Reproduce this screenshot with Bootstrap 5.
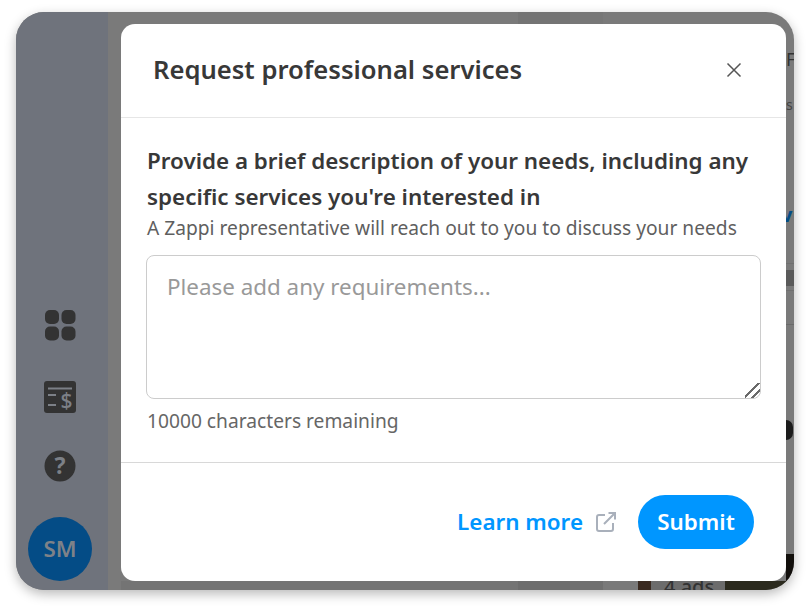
<!DOCTYPE html>
<html lang="en">
<head>
<meta charset="utf-8">
<title>Request professional services</title>
<link href="https://cdn.jsdelivr.net/npm/bootstrap@5.3.0/dist/css/bootstrap.min.css" rel="stylesheet">
<style>
html,body{height:100%;background:#fff;overflow:hidden}
body{padding:12px 16px 20px;font-family:"Noto Sans",sans-serif;color:#333}
.app-win{position:relative;height:578px;width:778px;border-radius:28px;overflow:hidden;background:#7a7a7a;box-shadow:0 4px 12px rgba(0,0,0,.28)}
.side-rail{width:92px;background:#6f737c;padding:0 4px 9px 0;gap:35px}
.side-ic{width:32px;height:32px;display:block}
.ic-grid{margin-bottom:5px}
.ic-bill{margin-bottom:2px}
.side-av{width:64px;height:64px;background:#044c86;color:#7e8288;font-size:22.4px;font-weight:600}
.bg-main{min-width:0}
.strip-a{position:absolute;top:0;left:502px;width:52px;height:12px;background:#747474}
.strip-b{position:absolute;top:0;left:554px;width:33px;height:12px;background:#777}
.foot-a{position:absolute;top:569px;left:502px;width:52px;height:9px;background:#6d6d6d}
.foot-b{position:absolute;top:569px;left:554px;width:33px;height:9px;background:#707070}
.foot-c{position:absolute;top:569px;left:105px;width:397px;height:9px;background:#747474}
.edge-p{position:absolute;left:770px;top:38px;font-size:18px;color:#333;line-height:1}
.edge-s{position:absolute;left:770px;top:86px;font-size:14px;color:#444;line-height:1}
.edge-v{position:absolute;left:765px;top:193px;font-size:20px;font-weight:700;color:#044c86;line-height:1}
.edge-bar{position:absolute;left:770px;top:258px;width:8px;height:16px;background:#5a5a5a}
.edge-l1{position:absolute;left:770px;top:251px;width:8px;height:1px;background:#707070}
.edge-l2{position:absolute;left:770px;top:278px;width:8px;height:1px;background:#707070}
.edge-line{position:absolute;left:770px;top:312px;width:8px;height:1px;background:#6a6a6a}
.edge-dot{position:absolute;left:770px;top:408px;width:7px;height:20px;background:#1c1c1c;border-radius:0 8px 8px 0}
.edge-foot-a{position:absolute;left:622px;top:569px;width:13px;height:9px;background:#3a2a20}
.edge-foot-b{position:absolute;left:635px;top:569px;width:74px;height:9px;background:#6c6c6c;color:#333;font-size:20px;font-weight:500;line-height:12px;padding-left:13px;overflow:hidden}
.edge-foot-c{position:absolute;left:709px;top:569px;width:61px;height:9px;background:#2b2a1e}
.edge-corner{position:absolute;left:770px;top:542px;width:8px;height:36px;background:linear-gradient(#120f0c 70%,#4a3526)}
.req-box{position:absolute;left:105px;top:12px;width:665px;height:557px;background:#fff;border-radius:14px;display:flex;flex-direction:column;border:0}
.req-head{height:94px;padding:0 42px 0 32px;border-bottom:1px solid #e6e6e6}
.req-title{font-size:25.6px;font-weight:600;color:#383838;margin:0;line-height:34px;position:relative;top:-1px}
.req-x{background:none;border:0;padding:0;width:20px;height:20px;display:block;position:relative;top:-1px}
.req-x svg{display:block}
.req-body{padding:25px 25px 0 26px;height:345px;border-bottom:1px solid #d8d8d8}
.req-lead{font-size:22.4px;font-weight:600;line-height:36px;color:#383838;margin:0}
.req-sub{font-size:19.2px;line-height:26px;color:#5f5f5f;margin:0 0 14px}
.req-area.form-control{height:144px;width:615px;margin-left:-1px;border:1px solid #ccc;border-radius:8px;font-size:22.4px;line-height:30px;padding:16px 20px;color:#333}
.req-area.form-control::placeholder{color:#999}
.req-area::-webkit-resizer{background:linear-gradient(135deg,transparent 42%,#6a6a6a 42% 52%,transparent 52% 68%,#6a6a6a 68% 78%,transparent 78%)}
.req-count{font-size:19.2px;line-height:26px;color:#666;margin:9px 0 0}
.req-foot{flex:1;padding:0 32px 0 0;gap:21px}
.req-more{font-size:22.4px;font-weight:600;color:#0096ff;text-decoration:none;gap:12px}
.req-send.btn{background:#0096ff;border:0;color:#fff;font-size:22.4px;font-weight:600;width:116px;height:54px;border-radius:27px;padding:0}
</style>
</head>
<body>
<div class="app-win d-flex">
  <nav class="side-rail d-flex flex-column align-items-center justify-content-end">
    <svg class="side-ic ic-grid" viewBox="0 0 32 32" aria-hidden="true" fill="#333"><rect x="1" y="1" width="14" height="14" rx="5"/><rect x="17.500" y="1" width="14" height="14" rx="5"/><rect x="1" y="17.500" width="14" height="14" rx="5"/><rect x="17.500" y="17.500" width="14" height="14" rx="5"/></svg>
    <svg class="side-ic ic-bill" viewBox="0 0 32 32" aria-hidden="true"><rect width="32" height="32" rx="3" fill="#333"/><path d="M4 7.500h24M4 14h8M4 24h8" stroke="#7c8087" stroke-width="2" fill="none"/><text x="22.500" y="26.500" font-family="Noto Sans" font-size="21" font-weight="500" fill="#7c8087" text-anchor="middle">$</text></svg>
    <svg class="side-ic" viewBox="0 0 32 32" aria-hidden="true"><circle cx="16" cy="16" r="15.500" fill="#333"/><text x="16" y="24" font-family="Noto Sans" font-size="23" font-weight="700" fill="#7c8087" text-anchor="middle">?</text></svg>
    <div class="side-av rounded-circle d-flex align-items-center justify-content-center">SM</div>
  </nav>
  <div class="bg-main flex-grow-1"></div>
  <i class="strip-a"></i><i class="strip-b"></i><i class="foot-c"></i><i class="foot-a"></i><i class="foot-b"></i>
  <span class="edge-p">F</span><span class="edge-s">s</span><span class="edge-v">v</span>
  <i class="edge-l1"></i><i class="edge-bar"></i><i class="edge-l2"></i><i class="edge-line"></i><i class="edge-dot"></i><i class="edge-corner"></i>
  <i class="edge-foot-a"></i><span class="edge-foot-b">4 ads</span><i class="edge-foot-c"></i>
  <div class="req-box">
    <div class="req-head d-flex align-items-center justify-content-between">
      <h1 class="req-title">Request professional services</h1>
      <button class="req-x" type="button" aria-label="Close"><svg width="20" height="20" viewBox="0 0 20 20" aria-hidden="true"><path d="M3.500 3.500l13 13M16.500 3.500l-13 13" stroke="#555" stroke-width="1.500" fill="none"/></svg></button>
    </div>
    <div class="req-body">
      <p class="req-lead">Provide a brief description of your needs, including any specific services you're interested in</p>
      <p class="req-sub">A Zappi representative will reach out to you to discuss your needs</p>
      <textarea class="form-control req-area" placeholder="Please add any requirements..."></textarea>
      <p class="req-count">10000 characters remaining</p>
    </div>
    <div class="req-foot d-flex align-items-center justify-content-end">
      <a class="req-more d-flex align-items-center" href="#">Learn more
        <svg width="22" height="22" viewBox="0 0 22 22" aria-hidden="true" fill="none" stroke="#a9b0bb" stroke-width="2"><path d="M10 4H4a2 2 0 0 0-2 2v12a2 2 0 0 0 2 2h12a2 2 0 0 0 2-2v-6"/><path d="M9 13 20 2M13.500 2H20v6.500"/></svg>
      </a>
      <button class="btn req-send" type="button">Submit</button>
    </div>
  </div>
</div>
<script src="https://cdn.jsdelivr.net/npm/bootstrap@5.3.0/dist/js/bootstrap.bundle.min.js"></script>
</body>
</html>
